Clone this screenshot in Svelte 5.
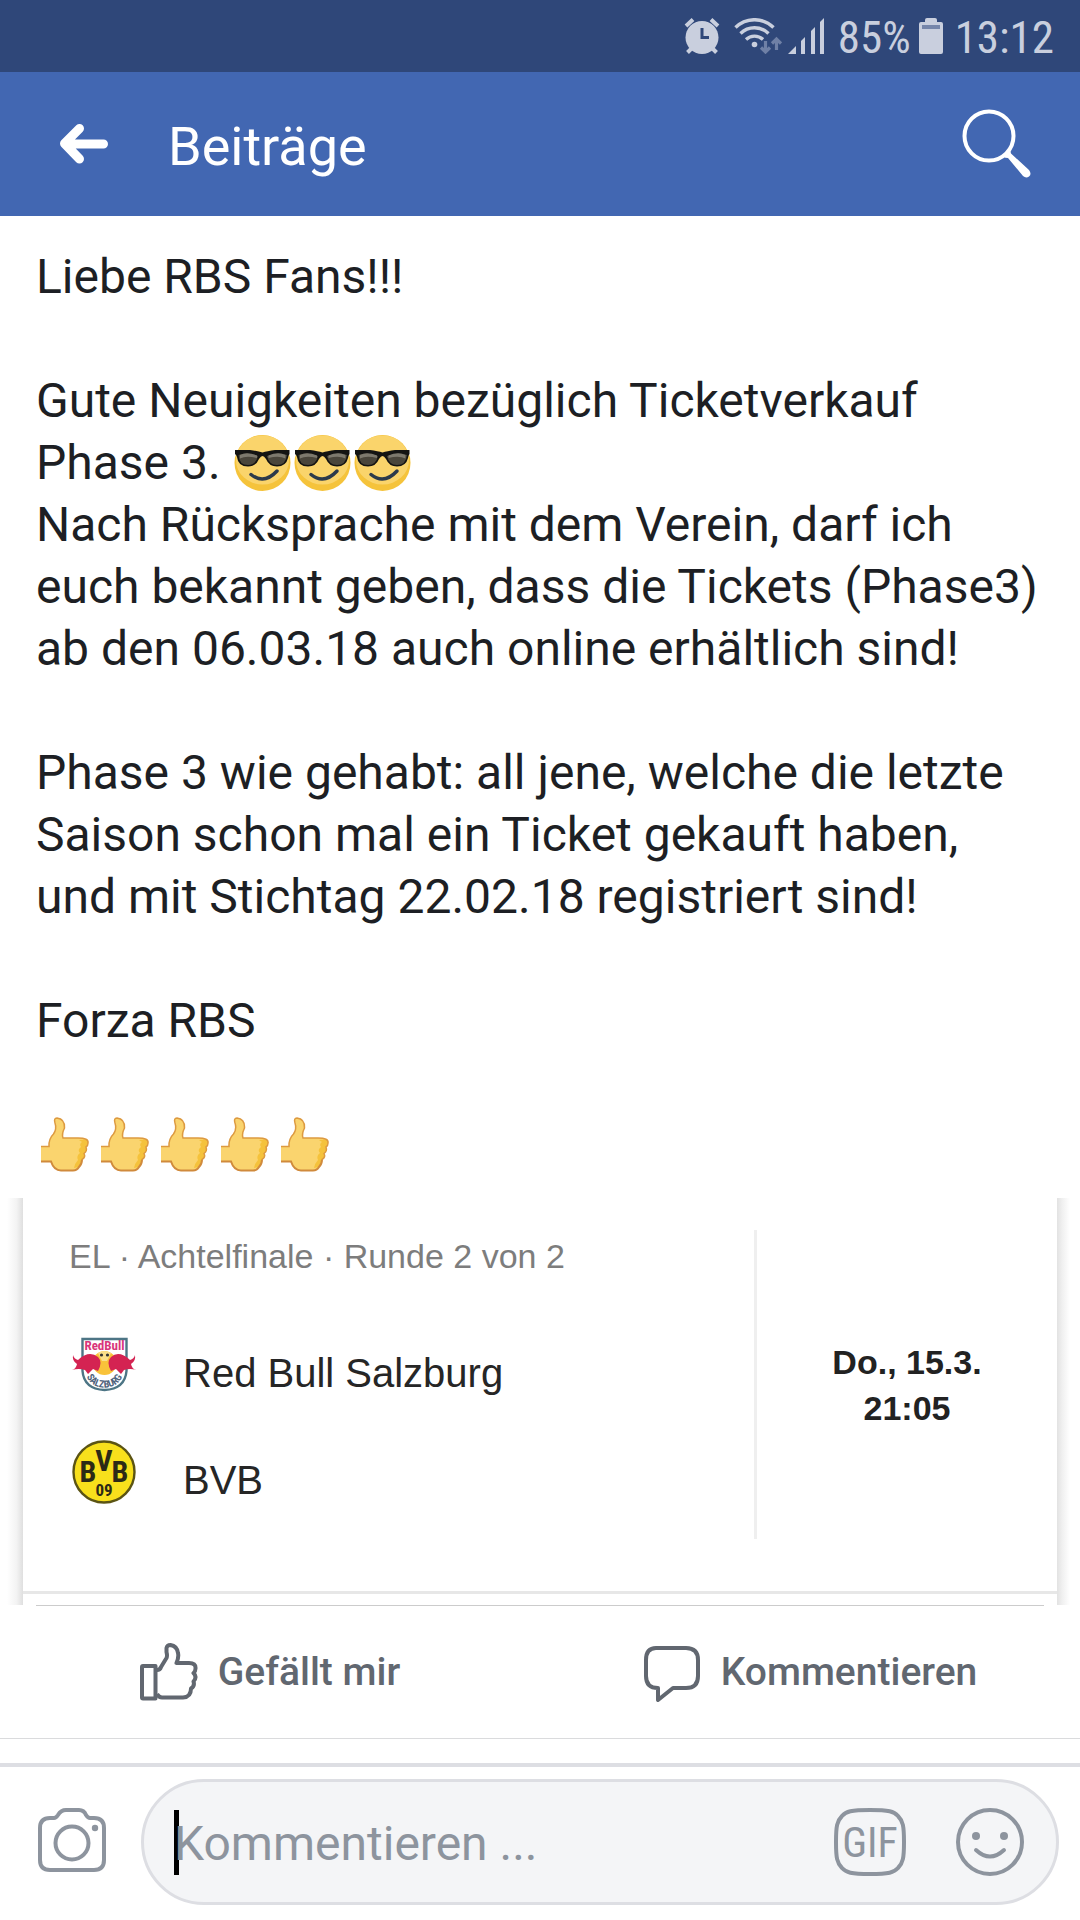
<script>
  let comment = $state('');

  const paragraphs = {
    intro: 'Liebe RBS Fans!!!',
    news: 'Gute Neuigkeiten bezüglich Ticketverkauf Phase 3.',
    club: 'Nach Rücksprache mit dem Verein, darf ich euch bekannt geben, dass die Tickets (Phase3) ab den 06.03.18 auch online erhältlich sind!',
    phase: 'Phase 3 wie gehabt: all jene, welche die letzte Saison schon mal ein Ticket gekauft haben, und mit Stichtag 22.02.18 registriert sind!',
    close: 'Forza RBS'
  };
</script>

{#snippet cool()}
  <svg class="emoji" viewBox="0 0 60 62" role="img" aria-label="Sonnenbrille">
    <circle cx="29.5" cy="31" r="28" fill="#f5c33b" />
    <ellipse cx="29.5" cy="28" rx="26.5" ry="24.5" fill="#fad46b" />
    <path d="M18 42.500Q31 53 44 39" fill="none" stroke="#2c3a4b" stroke-width="3.500" stroke-linecap="round" />
    <path d="M3 18H17Q25 19 29.500 20.500Q34 19 42 18H56.500V22Q55.500 23 55 26Q53 34.500 44 34.500Q36 34.500 33 27Q31 24 29.500 24Q28 24 26 27Q23 34.500 15 34.500Q5 34.500 4 25Q3.500 23 2 22V18Z" fill="#141412" />
    <path d="M5.500 23Q13 19.500 25 24Q23 33 15 33Q6 33 5.500 23ZM54 23Q46 19.500 34 24Q36 33 44 33Q53 33 54 23Z" fill="#4a463b" />
    <path d="M7 23Q14 19.500 24 23.500V26Q13 23.500 7 26.500ZM52.500 23Q45 19.500 35.500 23.500V26Q46 23.500 52.500 26.500Z" fill="#7d796d" />
  </svg>
{/snippet}

{#snippet thumb()}
  <svg class="emoji" viewBox="0 0 60 62" role="img" aria-label="Daumen hoch">
    <path d="M5 32.500H13Q12.500 25 17.500 20Q21 15 19 9Q17.500 4 21 4Q29 5 28.500 14Q25.500 20 27 24H42Q53 24 52 29Q52 32 50 33Q51.500 37 48 39.500Q50 43 46 45.500Q46 50 43 53Q41 56 37 56H25Q17 56 14.500 48H5Z" fill="#fad46e" />
    <path d="M43 26Q53 24 52 29Q52 32 50 33Q51.500 37 48 39.500Q50 43 46 45.500Q46 50 43 53L38 54Q39 49 42 46Q40 42 44 39Q41 36 45 33Q43 30 46 28Z" fill="#f5c23b" />
    <path d="M5 32.500H13Q12.500 25 17.500 20Q21 15 19 9Q17.500 4 21 4Q29 5 28.500 14Q25.500 20 27 24H42Q53 24 52 29Q52 32 50 33Q51.500 37 48 39.500Q50 43 46 45.500" fill="none" stroke="#dd9a40" stroke-width="1.500" />
    <path d="M5 47.500H15Q18 56.500 25 56.500H37Q41 56.500 43 53Q46 50 46 45.500" fill="none" stroke="#d08a3c" stroke-width="2" />
  </svg>
{/snippet}

<div class="screen">
  <div class="status">
    <svg width="36" height="36" viewBox="0 0 36 36" aria-label="Wecker" role="img">
      <path d="M2 8 9 1.500M34 8 27 1.500" stroke="#c9cfde" stroke-width="4" />
      <path d="M7 31 3.500 34.500M29 31 32.500 34.500" stroke="#c9cfde" stroke-width="4" />
      <circle cx="18" cy="19.500" r="16.500" fill="#c9cfde" />
      <path d="M18 10V19.500H25" fill="none" stroke="#2f4779" stroke-width="3" />
    </svg>
    <svg class="wifi" width="48" height="36" viewBox="0 0 48 36" aria-label="WLAN" role="img">
      <path d="M1.500 9.500A27 27 0 0 1 39.500 9.500M6.500 15.500A20 20 0 0 1 34.500 15.500M12 21.500A12.500 12.500 0 0 1 29 21.500" fill="none" stroke="#c9cfde" stroke-width="3.400" />
      <circle cx="20.500" cy="26.500" r="2.800" fill="#c9cfde" />
      <path d="M31.500 23V34M27 29.500 31.500 34 36 29.500M42.500 32V21M38 25.500 42.500 21 47 25.500" fill="none" stroke="#6f80a6" stroke-width="3.200" />
    </svg>
    <svg class="signal" width="36" height="36" viewBox="0 0 36 36" aria-label="Mobilfunk" role="img">
      <path d="M0 36 8 28V36ZM13 23 17 19V36H13ZM23 13 27 9V36H23ZM32 4 36 0V36H32Z" fill="#c9cfde" />
    </svg>
    <span class="level">85%</span>
    <svg class="battery" width="24" height="36" viewBox="0 0 24 36" aria-label="Akku" role="img">
      <path d="M6 4V2Q6 0 8 0H16Q18 0 18 2V4H22Q24 4 24 6V34Q24 36 22 36H2Q0 36 0 34V6Q0 4 2 4Z" fill="#c9cfde" />
      <path d="M3 7H21V11H3Z" fill="#7686aa" />
    </svg>
    <time>13:12</time>
  </div>

  <header>
    <button class="icon" aria-label="Zurück">
      <svg width="48" height="40" viewBox="0 0 48 40">
        <path d="M43.500 20H7M19.500 4.500 4.500 19.500 19.500 35" fill="none" stroke="#fff" stroke-width="9" stroke-linecap="round" stroke-linejoin="round" />
      </svg>
    </button>
    <h1>Beiträge</h1>
    <button class="icon" aria-label="Suchen">
      <svg width="70" height="70" viewBox="0 0 70 70">
        <circle cx="27" cy="27" r="24.500" fill="none" stroke="#fff" stroke-width="4" />
        <path d="M41 47.500Q45 46 47.500 42Q48.500 41 49 44.500L67 61Q70 65 67 67.500Q64 69.500 61 67L46 49Q43 49 41 47.500Z" fill="#fff" />
      </svg>
    </button>
  </header>

  <main>
    <article>
      <p>{paragraphs.intro}</p>
      <p>
        {paragraphs.news} {@render cool()}{@render cool()}{@render cool()}<br />{paragraphs.club}
      </p>
      <p>{paragraphs.phase}</p>
      <p>{paragraphs.close}</p>
      <p>{@render thumb()}{@render thumb()}{@render thumb()}{@render thumb()}{@render thumb()}</p>
    </article>

    <section class="attachment">
      <div class="card">
        <div class="match">
          <div class="teams">
            <h2>EL · Achtelfinale · Runde 2 von 2</h2>
            <ul>
              <li>
                <span class="crest">
                  <svg width="66" height="64" viewBox="0 0 66 64" aria-hidden="true">
                    <path d="M11.500 6H55.500V38Q54 56 33.500 57Q13 56 11.500 38Z" fill="#fff" stroke="#4d7585" stroke-width="2.400" />
                    <circle cx="33.500" cy="30" r="12" fill="#f9c33a" />
                    <path d="M1 37Q5 36 6 31Q1 28 2 22Q3 26 7 27Q18 17 27 24Q32 29 27 38L22 36 17 41 14 37Q8 35 1 37ZM65 37Q61 36 60 31Q65 28 64 22Q63 26 59 27Q48 17 40 24Q35 29 40 38L45 36 50 41 53 37Q59 35 65 37Z" fill="#d42352" />
                    <path d="M27 20Q33 16 40 20L36 28H31Z" fill="#fbe08a" />
                    <circle cx="30.500" cy="22" r="1.600" fill="#333" />
                    <circle cx="36.500" cy="22" r="1.600" fill="#333" />
                    <text x="33.500" y="17" text-anchor="middle" font-size="13" fill="#d8357b">RedBull</text>
                    <path id="salzburg" d="M15 42Q20 54.500 33.500 54.500Q47 54.500 52 42" fill="none" />
                    <text font-size="10" fill="#50637c" text-anchor="middle"><textPath href="#salzburg" startOffset="50%">SALZBURG</textPath></text>
                  </svg>
                </span>
                <span class="name">Red Bull Salzburg</span>
              </li>
              <li>
                <span class="crest">
                  <svg width="64" height="64" viewBox="0 0 64 64" aria-hidden="true">
                    <circle cx="32" cy="32" r="30.500" fill="#f8e01c" stroke="#5b5414" stroke-width="2.400" />
                    <g fill="#2c2a16" text-anchor="middle">
                      <text x="16" y="42" font-size="30">B</text>
                      <text x="32" y="31" font-size="30">V</text>
                      <text x="48" y="42" font-size="30">B</text>
                      <text x="32" y="56" font-size="17">09</text>
                    </g>
                  </svg>
                </span>
                <span class="name">BVB</span>
              </li>
            </ul>
          </div>
          <div class="kickoff">Do., 15.3.<br />21:05</div>
        </div>
      </div>
    </section>

    <div class="actions">
      <button>
        <svg width="60" height="60" viewBox="1 0 60 60" aria-hidden="true">
          <g fill="none" stroke="#616770" stroke-width="4" stroke-linejoin="round">
            <path d="M4 24H16.500V56.500H4Q3 56.500 3 55.500V25Q3 24 4 24Z" />
            <path d="M18 28Q21 28 22 25L27.500 16Q28.500 14 27.500 10V6Q28 3 31.500 3Q38 4 39 11Q40 15 37.500 21H50Q57 21 56.500 26.500Q56.500 29.500 54.500 31Q58.500 35 54.500 39.500Q56 44 52 46.500Q52 55 44 55.500H23Q20 55.500 18 52" />
          </g>
        </svg>
        Gefällt mir
      </button>
      <button>
        <svg width="60" height="60" viewBox="1 0 60 60" aria-hidden="true">
          <path d="M14 6H44Q56 6 56 18V34Q56 46 44 46H31L16 58V46Q4 46 4 34V18Q4 6 14 6Z" fill="none" stroke="#616770" stroke-width="4" stroke-linejoin="round" />
        </svg>
        Kommentieren
      </button>
    </div>
  </main>

  <form class="composer">
    <button type="button" class="icon camera" aria-label="Foto">
      <svg width="68" height="64" viewBox="0 0 68 64">
        <g fill="none" stroke="#8d949e" stroke-width="4">
          <path d="M2 20Q2 10 12 10H16Q18 10 20 7Q23 2 28 2H41Q46 2 48 7Q50 10 52 10H56Q66 10 66 20V52Q66 62 56 62H12Q2 62 2 52Z" />
          <circle cx="34" cy="35" r="16.500" />
        </g>
        <circle cx="57" cy="20" r="3.200" fill="#8d949e" />
      </svg>
    </button>
    <div class="field">
      <span class="caret"></span>
      <input type="text" aria-label="Kommentieren" placeholder="Kommentieren ..." bind:value={comment} />
      <button type="button" class="icon" aria-label="GIF einfügen">
        <svg width="72" height="68" viewBox="0 0 72 68">
          <path d="M36 2C55 2 60 3.500 64 8C69 13 70 18 70 34C70 50 69 55 64 60C60 64.500 55 66 36 66C17 66 12 64.500 8 60C3 55 2 50 2 34C2 18 3 13 8 8C12 3.500 17 2 36 2Z" fill="none" stroke="#8d949e" stroke-width="4" />
          <text class="gif" x="36" y="49" text-anchor="middle">GIF</text>
        </svg>
      </button>
      <button type="button" class="icon" aria-label="Emoji einfügen">
        <svg width="68" height="68" viewBox="0 0 68 68">
          <circle cx="34" cy="34" r="32" fill="none" stroke="#8d949e" stroke-width="4" />
          <circle cx="20" cy="28" r="4" fill="#8d949e" />
          <circle cx="48" cy="28" r="4" fill="#8d949e" />
          <path d="M20 42Q34 55 48 42" fill="none" stroke="#8d949e" stroke-width="4" stroke-linecap="round" />
        </svg>
      </button>
    </div>
  </form>
</div>

<style>
  :global(body) {
    background: #fff;
  }

  .screen {
    display: flex;
    flex-direction: column;
    min-height: 100vh;
    font-family: Roboto, 'Liberation Sans', sans-serif;
    color: #1d1f24;
  }

  svg {
    display: block;
    flex: none;
  }

  button {
    margin: 0;
    padding: 0;
    border: 0;
    background: none;
    color: inherit;
    font: inherit;
    cursor: pointer;
  }

  .status {
    display: flex;
    align-items: center;
    justify-content: flex-end;
    height: 72px;
    padding-right: 26px;
    background: #2f4779;
    color: #c9cfde;
    font-family: 'Roboto Condensed', Roboto, sans-serif;
    font-size: 45px;
  }

  .level,
  time {
    padding-top: 2px;
  }

  .wifi {
    margin-left: 14px;
  }

  .signal {
    margin-left: 6px;
  }

  .level {
    margin-left: 14px;
  }

  .battery {
    margin: 0 12px 0 8px;
  }

  header {
    display: flex;
    align-items: center;
    height: 144px;
    padding: 0 48px 0 60px;
    background: #4267b2;
    color: #fff;
  }

  h1 {
    flex: 1;
    margin: 0;
    padding: 6px 0 0 60px;
    font-size: 54px;
    font-weight: 400;
    line-height: 64px;
  }

  main {
    flex: 1;
  }

  article {
    display: flex;
    flex-direction: column;
    gap: 62px;
    padding: 30px 36px 22px;
    font-size: 48px;
    line-height: 62px;
  }

  p {
    margin: 0;
  }

  .emoji {
    display: inline-block;
    width: 60px;
    height: 62px;
    vertical-align: top;
  }

  .attachment {
    display: flex;
    padding: 0 10px 0 7px;
    font-family: 'Liberation Sans', Arial, sans-serif;
  }

  .attachment::before,
  .attachment::after {
    content: '';
    width: 16px;
    background: linear-gradient(to right, #fff, #f3f3f3 60%, #dfdfdf);
  }

  .attachment::after {
    width: 13px;
    background: linear-gradient(to left, #fff, #f0f0f0 60%, #e2e2e2);
  }

  .card {
    flex: 1;
    padding-bottom: 11px;
  }

  .match {
    display: flex;
    border-bottom: 3px solid #e7e7e7;
  }

  .teams {
    flex: 1;
    padding: 38px 0 87px 46px;
  }

  h2 {
    margin: 0 0 57px;
    color: #7d7d7d;
    font-size: 34px;
    font-weight: 400;
    line-height: 40px;
  }

  ul {
    display: flex;
    flex-direction: column;
    gap: 43px;
    margin: 0;
    padding: 0;
    list-style: none;
  }

  li {
    display: flex;
    align-items: center;
    gap: 44px;
    height: 64px;
  }

  .crest {
    display: flex;
    justify-content: center;
    width: 70px;
  }

  .crest text {
    font-family: 'Roboto Condensed', Roboto, sans-serif;
    font-weight: 700;
  }

  .name {
    padding-top: 16px;
    color: #262626;
    font-size: 40px;
    line-height: 46px;
  }

  .kickoff {
    display: grid;
    align-content: center;
    width: 300px;
    margin: 32px 0 52px;
    border-left: 3px solid #efefef;
    color: #222;
    font-size: 34px;
    font-weight: 700;
    line-height: 46px;
    text-align: center;
  }

  .actions {
    display: grid;
    grid-template-columns: 1fr 1fr;
    height: 132px;
    border-bottom: 1px solid #dadbdd;
    background: linear-gradient(#ccc, #ccc) 36px 0 / calc(100% - 72px) 1px no-repeat;
    padding-top: 1px;
  }

  .actions button {
    display: flex;
    align-items: center;
    justify-content: center;
    gap: 18px;
    color: #616770;
    font-size: 39px;
    font-weight: 500;
  }

  .composer {
    display: flex;
    align-items: center;
    gap: 35px;
    margin-top: 24px;
    padding: 12px 21px 15px 38px;
    border-top: 4px solid #dddee3;
  }

  .camera {
    padding-bottom: 4px;
  }

  .field {
    display: flex;
    flex: 1;
    align-items: center;
    min-width: 0;
    height: 120px;
    padding: 0 32px 0 30px;
    border: 3px solid #dddee3;
    border-radius: 63px;
    background: #f4f5f7;
  }

  .caret {
    width: 5px;
    height: 65px;
    margin-right: -5px;
    background: #000;
  }

  input {
    position: relative;
    flex: 1;
    min-width: 0;
    padding: 4px 0 0;
    border: 0;
    outline: 0;
    background: none;
    color: #1d1f24;
    font: inherit;
    font-size: 48px;
    line-height: 64px;
  }

  input::placeholder {
    color: #8d949e;
    opacity: 1;
  }

  .field .icon + .icon {
    margin-left: 50px;
  }

  .gif {
    fill: #8d949e;
    font-family: 'Roboto Condensed', Roboto, sans-serif;
    font-size: 42px;
  }
</style>
